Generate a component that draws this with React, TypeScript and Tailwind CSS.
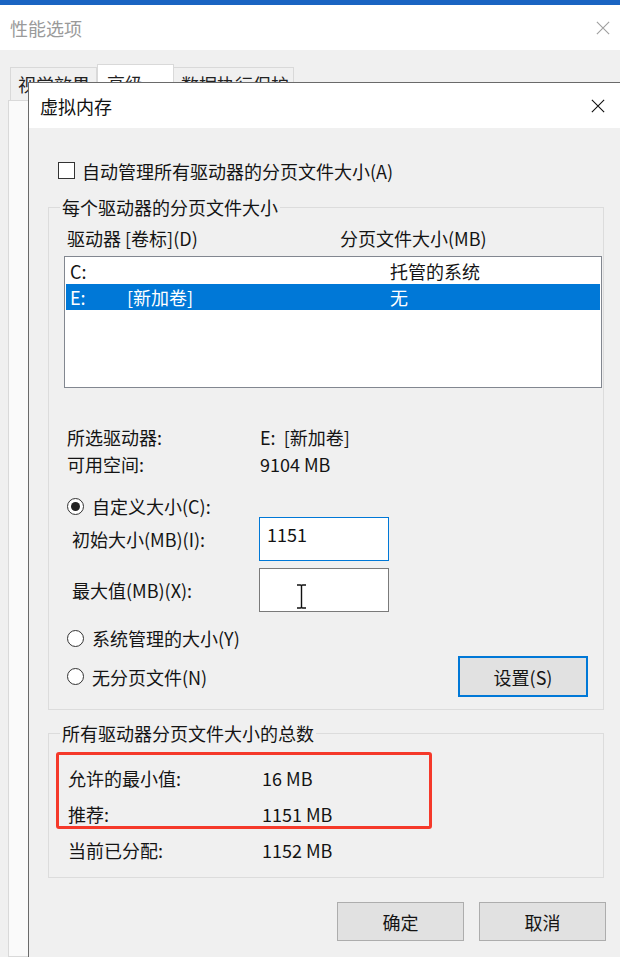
import React from "react";

function XIcon({ className }: { className?: string }) {
  return (
    <svg viewBox="0 0 16 16" className={className} fill="none" stroke="currentColor" strokeWidth="1.3">
      <path d="M1 1 L15 15 M15 1 L1 15" />
    </svg>
  );
}

function Radio({ checked }: { checked?: boolean }) {
  return (
    <span className="flex items-center justify-center w-[17px] h-[17px] rounded-full border border-[#333] bg-white shrink-0">
      {checked && <span className="w-[9px] h-[9px] rounded-full bg-[#222]" />}
    </span>
  );
}

export default function App() {
  return (
    <div className="relative w-[620px] h-[957px] overflow-hidden bg-[#f0f0f0] font-['Noto_Sans_CJK_SC','Microsoft_YaHei',sans-serif] text-[18px] text-[#141414]">
      {/* background window: 性能选项 */}
      <div className="flex flex-col h-full">
        <div className="h-[5px] bg-[#1a64c2]" />
        <div className="h-[45px] bg-white flex items-center justify-between pl-[10px] pr-[10px]">
          <span className="text-[#9a9a9a] leading-[26px]">性能选项</span>
          <XIcon className="w-[14px] h-[14px] text-[#a0a0a0]" />
        </div>
        <div className="flex-1 flex flex-col pt-[14px] bg-[#f0f0f0]">
          <div className="flex items-end ml-[10px] h-[36px]">
            <div className="w-[87px] h-[33px] border border-b-0 border-[#d9d9d9] bg-[#f0f0f0] pl-[7px] pt-[5px] leading-[22px] text-[#222]">视觉效果</div>
            <div className="w-[77px] h-[36px] border border-b-0 border-[#d9d9d9] bg-white pl-[9px] pt-[7px] leading-[22px] text-[#222]">高级</div>
            <div className="w-[120px] h-[33px] border border-b-0 border-l-0 border-[#d9d9d9] bg-[#f0f0f0] pl-[7px] pt-[5px] leading-[22px] text-[#222]">数据执行保护</div>
          </div>
          <div className="flex-1 ml-[8px] border border-[#d9d9d9] bg-[#fafafa]" />
        </div>
      </div>

      {/* overlay dialog: 虚拟内存 */}
      <div className="absolute left-[28px] top-[82px] w-[592px] h-[875px] border-l border-t border-[#6a6a6a] bg-[#f0f0f0] flex flex-col">
        <div className="h-[45px] bg-white flex items-center justify-between pl-[11px] pr-[15px] shrink-0">
          <span className="leading-[26px] text-[#111]">虚拟内存</span>
          <XIcon className="w-[14px] h-[14px] text-[#111]" />
        </div>

        <div className="flex flex-col">
          {/* checkbox */}
          <div className="mt-[34px] ml-[29px] h-[17px] flex items-center gap-[7px]">
            <span className="w-[17px] h-[17px] border border-[#333] bg-white shrink-0" />
            <span className="leading-[26px] whitespace-nowrap">自动管理所有驱动器的分页文件大小(A)</span>
          </div>

          {/* group 1 */}
          <fieldset className="mt-[15px] ml-[19px] w-[556px] border border-[#dcdcdc] pb-[12px]">
            <legend className="ml-[11px] px-[2px] leading-[26px] whitespace-nowrap">每个驱动器的分页文件大小</legend>
            <div className="mt-[5px] pl-[18px] flex leading-[26px] h-[26px]">
              <span className="w-[273px] whitespace-nowrap">驱动器 [卷标](D)</span>
              <span className="whitespace-nowrap">分页文件大小(MB)</span>
            </div>
            <div className="mt-[5px] ml-[15px] w-[538px] h-[132px] border border-[#828790] bg-white p-[1px]">
              <div className="flex h-[26px] items-center pl-[4px] leading-[26px]">
                <span className="w-[57px]">C:</span>
                <span className="w-[263px]" />
                <span className="whitespace-nowrap">托管的系统</span>
              </div>
              <div className="flex h-[26px] items-center pl-[4px] leading-[26px] bg-[#0078d7] text-white">
                <span className="w-[57px]">E:</span>
                <span className="w-[263px] whitespace-nowrap">[新加卷]</span>
                <span>无</span>
              </div>
            </div>

            <div className="mt-[36px] pl-[18px] flex flex-col leading-[27px]">
              <div className="flex">
                <span className="w-[193px]">所选驱动器:</span>
                <span className="whitespace-pre">E:  [新加卷]</span>
              </div>
              <div className="flex">
                <span className="w-[193px]">可用空间:</span>
                <span>9104 MB</span>
              </div>
            </div>

            <div className="mt-[18px] ml-[18px] h-[20px] flex items-center gap-[8px]">
              <Radio checked />
              <span className="leading-[26px] whitespace-nowrap">自定义大小(C):</span>
            </div>

            <div className="mt-[1px] pl-[23px] flex items-center h-[44px]">
              <span className="w-[187px] leading-[26px] whitespace-nowrap">初始大小(MB)(I):</span>
              <div className="w-[130px] h-[44px] border border-[#0078d7] bg-white pl-[7px] pt-[4px] leading-[24px]">1151</div>
            </div>
            <div className="mt-[7px] pl-[23px] flex items-center h-[44px]">
              <span className="w-[187px] leading-[26px] whitespace-nowrap">最大值(MB)(X):</span>
              <div className="relative w-[130px] h-[44px] border border-[#7a7a7a] bg-white">
                <svg className="absolute left-[36px] top-[15px]" width="11" height="25" viewBox="0 0 11 25" fill="none" stroke="#111" strokeWidth="1.4">
                  <path d="M1 1 H4.5 Q5.5 1 5.5 2.5 V22.5 Q5.5 24 4.5 24 H1 M10 1 H6.5 Q5.5 1 5.5 2.5 M5.5 22.5 Q5.5 24 6.5 24 H10" />
                </svg>
              </div>
            </div>

            <div className="mt-[13px] ml-[18px] h-[26px] flex items-center gap-[8px]">
              <Radio />
              <span className="leading-[26px] whitespace-nowrap">系统管理的大小(Y)</span>
            </div>

            <div className="mt-[5px] ml-[18px] mr-[15px] h-[41px] flex items-center justify-between">
              <div className="flex items-center gap-[8px]">
                <Radio />
                <span className="leading-[26px] whitespace-nowrap">无分页文件(N)</span>
              </div>
              <button className="w-[130px] h-[41px] border-2 border-[#0078d7] bg-[#e1e1e1] leading-[26px] text-[#141414]">设置(S)</button>
            </div>
          </fieldset>

          {/* group 2 */}
          <fieldset className="mt-[10px] ml-[19px] w-[556px] border border-[#dcdcdc] pb-[9px]">
            <legend className="ml-[11px] px-[2px] leading-[26px] whitespace-nowrap">所有驱动器分页文件大小的总数</legend>
            <div className="relative mt-[14px] pl-[19px] flex flex-col">
              <div className="flex h-[36px] items-center leading-[26px]">
                <span className="w-[194px] whitespace-nowrap">允许的最小值:</span>
                <span>16 MB</span>
              </div>
              <div className="flex h-[36px] items-center leading-[26px]">
                <span className="w-[194px]">推荐:</span>
                <span>1151 MB</span>
              </div>
              <div className="flex h-[36px] items-center leading-[26px]">
                <span className="w-[194px] whitespace-nowrap">当前已分配:</span>
                <span>1152 MB</span>
              </div>
              <div className="absolute left-[7px] top-[-8px] w-[376px] h-[77px] border-[3px] border-[#f5392a] rounded-[3px]" />
            </div>
          </fieldset>

          {/* buttons */}
          <div className="mt-[24px] flex justify-end gap-[15px] pr-[14px]">
            <button className="w-[127px] h-[39px] border border-[#adadad] bg-[#e1e1e1] leading-[26px] text-[#141414]">确定</button>
            <button className="w-[127px] h-[39px] border border-[#adadad] bg-[#e1e1e1] leading-[26px] text-[#141414]">取消</button>
          </div>
        </div>
      </div>
    </div>
  );
}
